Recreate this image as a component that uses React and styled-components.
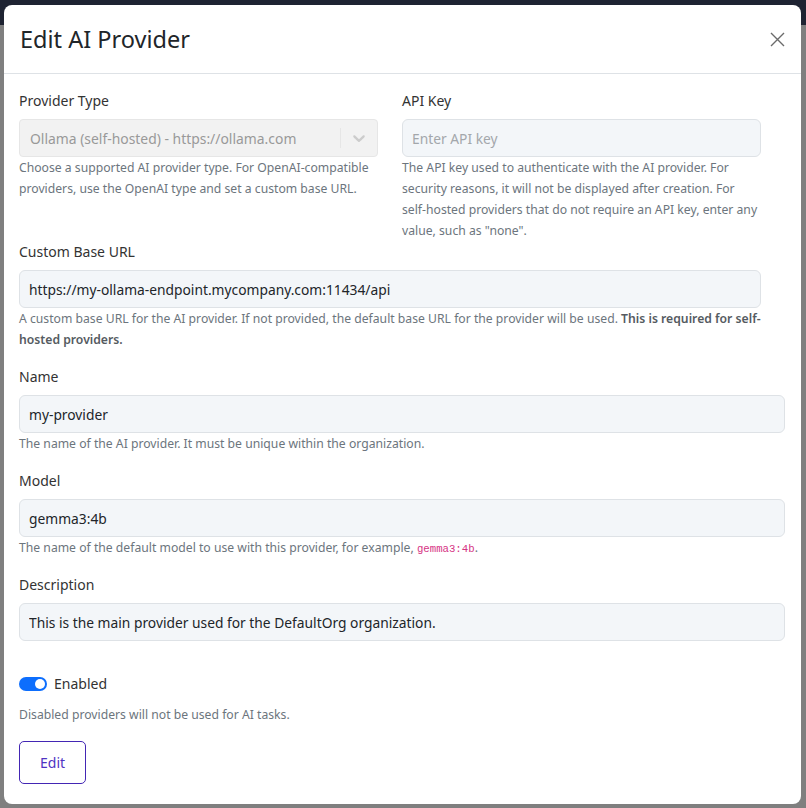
import React from "react";
import styled, { createGlobalStyle } from "styled-components";

const GlobalStyle = createGlobalStyle`
  * { box-sizing: border-box; }
  body {
    margin: 0;
    font-family: "Noto Sans", "Open Sans", sans-serif;
    background: #ffffff;
    color: #212529;
  }
`;

const Page = styled.div`
  min-height: 808px;
  background: #ffffff;
`;

const Navbar = styled.div`
  height: 25px;
  background: #3c4664;
`;

const Backdrop = styled.div`
  position: fixed;
  inset: 0;
  background: rgba(0, 0, 0, 0.5);
  padding: 5px 5px 3px 4px;
  display: flex;
  align-items: flex-start;
`;

const Modal = styled.div`
  flex: 1;
  background: #ffffff;
  border-radius: 8px;
  display: flex;
  flex-direction: column;
`;

const Header = styled.div`
  display: flex;
  align-items: center;
  justify-content: space-between;
  padding: 16px;
  border-bottom: 1px solid #dee2e6;
`;

const Title = styled.h1`
  margin: 0;
  font-size: 23.5px;
  font-weight: 400;
  line-height: 36px;
  color: #212529;
`;

const CloseButton = styled.button`
  border: 0;
  background: none;
  padding: 0;
  width: 15px;
  height: 15px;
  display: flex;
  cursor: pointer;
`;

const Body = styled.div`
  padding: 16px 16px 20px 15px;
`;

const TopRow = styled.div`
  display: grid;
  grid-template-columns: 359px 359px;
  column-gap: 24px;
`;

const Field = styled.div`
  margin-bottom: ${(p) => (p.$flush ? "0" : "16px")};
  max-width: ${(p) => (p.$narrow ? "742px" : "none")};
`;

const Label = styled.label`
  display: block;
  font-size: 14px;
  line-height: 21px;
  color: #333333;
  margin-bottom: 8px;
`;

const Input = styled.input`
  display: block;
  width: 100%;
  height: 38px;
  padding: 0 9px;
  border: 1px solid #dee2e6;
  border-radius: 6px;
  background: #f3f6f9;
  font-family: inherit;
  font-size: 13.8px;
  color: #212529;
  outline: none;

  &::placeholder {
    color: #a3a7ab;
  }
`;

const Select = styled.div`
  display: flex;
  align-items: center;
  height: 38px;
  border: 1px solid #e6e6e6;
  border-radius: 4px;
  background: #f2f2f2;
`;

const SelectValue = styled.div`
  flex: 1;
  padding: 0 10px;
  font-size: 13.9px;
  color: #999999;
  white-space: nowrap;
  overflow: hidden;
`;

const Separator = styled.span`
  width: 1px;
  align-self: stretch;
  margin: 8px 0;
  background: #e6e6e6;
`;

const Indicator = styled.span`
  display: flex;
  padding: 8px;
  color: #cccccc;
`;

const Help = styled.div`
  font-size: 12.2px;
  line-height: 21px;
  color: #6c757d;
  margin-top: ${(p) => p.$gap || "0"};

  strong {
    font-weight: 600;
    color: #555b61;
  }

  code {
    font-family: "Liberation Mono", "DejaVu Sans Mono", monospace;
    font-size: 10.7px;
    line-height: 1;
    color: #d63384;
  }
`;

const SwitchRow = styled.div`
  display: flex;
  align-items: center;
  gap: 7px;
  margin-top: 32px;
  font-size: 14px;
  line-height: 21px;
  color: #333333;
`;

const Track = styled.span`
  width: 28px;
  height: 14px;
  border-radius: 7px;
  background: ${(p) => (p.$on ? "#0d6efd" : "#dee2e6")};
  display: flex;
  align-items: center;
  justify-content: ${(p) => (p.$on ? "flex-end" : "flex-start")};
  padding: 0 2px;
`;

const Knob = styled.span`
  width: 10px;
  height: 10px;
  border-radius: 50%;
  background: #ffffff;
`;

const Button = styled.button`
  margin-top: 16px;
  padding: 10px 20px;
  border: 1px solid #4326b4;
  border-radius: 5px;
  background: #ffffff;
  font-family: inherit;
  font-size: 14px;
  line-height: 21px;
  color: #4f33c2;
  cursor: pointer;
`;

function Chevron() {
  return (
    <svg width="20" height="20" viewBox="0 0 20 20" fill="currentColor">
      <path d="M4.516 7.548c0.436-0.446 1.043-0.481 1.576 0l3.908 3.747 3.908-3.747c0.533-0.481 1.141-0.446 1.574 0 0.436 0.445 0.408 1.197 0 1.615-0.406 0.418-4.695 4.502-4.695 4.502-0.217 0.223-0.502 0.335-0.787 0.335s-0.57-0.112-0.789-0.335c0 0-4.287-4.084-4.695-4.502s-0.436-1.17 0-1.615z" />
    </svg>
  );
}

function CloseIcon() {
  return (
    <svg width="15" height="15" viewBox="0 0 15 15">
      <path d="M1 1 L14 14 M14 1 L1 14" stroke="#6b6b6b" strokeWidth="1.4" />
    </svg>
  );
}

export default function App() {
  return (
    <>
      <GlobalStyle />
      <Page>
        <Navbar />
      </Page>
      <Backdrop>
        <Modal>
          <Header>
            <Title>Edit AI Provider</Title>
            <CloseButton aria-label="Close">
              <CloseIcon />
            </CloseButton>
          </Header>
          <Body>
            <TopRow>
              <Field $flush>
                <Label>Provider Type</Label>
                <Select>
                  <SelectValue>Ollama (self-hosted) - https://ollama.com</SelectValue>
                  <Separator />
                  <Indicator>
                    <Chevron />
                  </Indicator>
                </Select>
                <Help>
                  Choose a supported AI provider type. For OpenAI-compatible
                  providers, use the OpenAI type and set a custom base URL.
                </Help>
              </Field>
              <Field $flush>
                <Label>API Key</Label>
                <Input placeholder="Enter API key" />
                <Help>
                  The API key used to authenticate with the AI provider. For
                  security reasons, it will not be displayed after creation. For
                  self-hosted providers that do not require an API key, enter any
                  value, such as "none".
                </Help>
              </Field>
            </TopRow>
            <Field $narrow>
              <Label>Custom Base URL</Label>
              <Input defaultValue="https://my-ollama-endpoint.mycompany.com:11434/api" />
              <Help>
                A custom base URL for the AI provider. If not provided, the
                default base URL for the provider will be used.{" "}
                <strong>This is required for self-hosted providers.</strong>
              </Help>
            </Field>
            <Field>
              <Label>Name</Label>
              <Input defaultValue="my-provider" />
              <Help>The name of the AI provider. It must be unique within the organization.</Help>
            </Field>
            <Field>
              <Label>Model</Label>
              <Input defaultValue="gemma3:4b" />
              <Help>
                The name of the default model to use with this provider, for
                example, <code>gemma3:4b</code>.
              </Help>
            </Field>
            <Field>
              <Label>Description</Label>
              <Input defaultValue="This is the main provider used for the DefaultOrg organization." />
            </Field>
            <SwitchRow>
              <Track $on>
                <Knob />
              </Track>
              Enabled
            </SwitchRow>
            <Help $gap="10px">Disabled providers will not be used for AI tasks.</Help>
            <Button>Edit</Button>
          </Body>
        </Modal>
      </Backdrop>
    </>
  );
}
